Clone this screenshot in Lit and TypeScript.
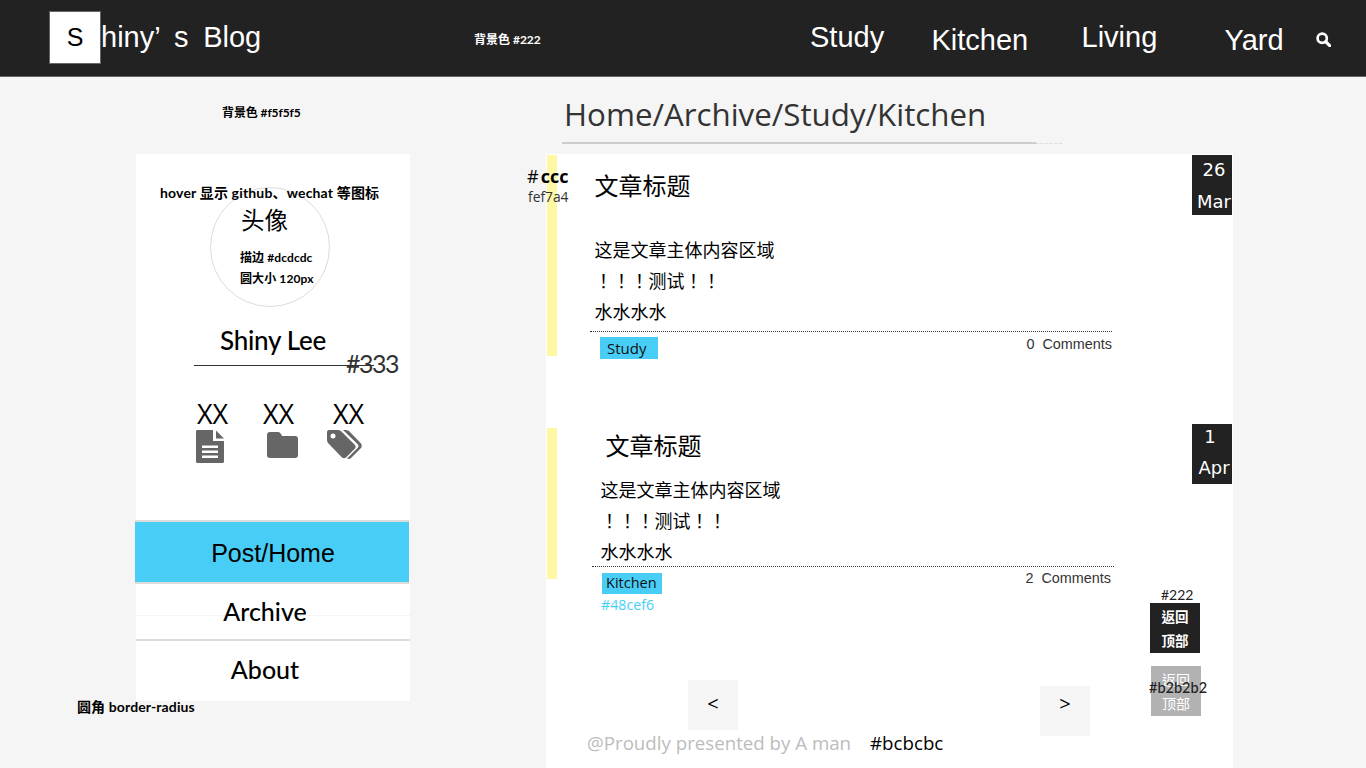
import { LitElement, html, css, svg } from "lit";
import { customElement } from "lit/decorators.js";

const fileIcon = svg`<svg class="ic file" viewBox="0 0 28 33"><path fill="#666" d="M1 0H17V11H28V31.500Q28 33 26.500 33H1.500Q0 33 0 31.500V1.500Q0 0 1 0ZM20 0.500L28 8.500H20ZM6 15.500V18H22V15.500ZM6 20.500V23H22V20.500ZM6 25.500V28H22V25.500Z" fill-rule="evenodd"/></svg>`;
const folderIcon = svg`<svg class="ic folder" viewBox="0 0 31 26"><path fill="#666" d="M3 0H11Q13 0 14 2L15 4H28Q31 4 31 7V23Q31 26 28 26H3Q0 26 0 23V3Q0 0 3 0Z"/></svg>`;
const tagsIcon = svg`<svg class="ic tags" viewBox="0 0 35 29"><path fill="#666" fill-rule="evenodd" d="M2 0H11Q13 0 14.500 1.500L28 15Q29.500 17 28 18.500L19 27.500Q17 29 15 27.500L1.500 13.500Q0 12 0 10V2Q0 0 2 0ZM6 3.500A2.500 2.500 0 1 0 6 8.500A2.500 2.500 0 1 0 6 3.500Z"/><path fill="#666" d="M16 0H19Q21 0 22.500 1.500L34 13.500Q35.500 16 34 18L24 28Q22 29.500 20 28.500L31 17.500Q32 16 31 14.500Z"/></svg>`;
const searchIcon = svg`<svg class="search" viewBox="0 0 14 14"><circle cx="5.800" cy="5.800" r="4.300" fill="none" stroke="#fff" stroke-width="2.500"/><path d="M9 9L12.800 12.800" stroke="#fff" stroke-width="3" stroke-linecap="round"/></svg>`;

@customElement("app-root")
export class AppRoot extends LitElement {
  static styles = css`
    :host {
      display: block; position: relative; width: 1366px; height: 768px; overflow: hidden;
      background: #f5f5f5; color: #000;
      font-family: "Lato", "Noto Sans CJK SC", sans-serif;
    }
    * { box-sizing: border-box; }
    .note { position: absolute; white-space: nowrap; line-height: 1; }
    .b { font-weight: 700; font-size: 12px; }
    .n-head { left: 474px; top: 34px; color: #fff; }
    .n-page { left: 222px; top: 107px; letter-spacing: -0.1px; }
    .n-hover { left: 160px; top: 186px; font-size: 14px; font-weight: 700; letter-spacing: 0.17px; }
    .n-avatar { left: 241px; top: 209px; font-size: 23.500px; }
    .n-border { left: 240px; top: 252px; letter-spacing: 0.1px; }
    .n-size { left: 240px; top: 273px; letter-spacing: 0.1px; }
    .n-333 { left: 346px; top: 351px; font-size: 25px; color: #333; letter-spacing: -1.500px; }
    .n-radius { left: 77px; top: 700px; font-size: 14px; font-weight: 700; letter-spacing: 0.12px; }
    .n-ccc { left: 527px; top: 167px; font-size: 18px; font-family: "Open Sans", sans-serif; }
    .n-ccc b { margin-left: 2px; }
    .n-fef { left: 528px; top: 190px; font-size: 13.800px; font-family: "Open Sans", sans-serif; color: #333; }
    .n-blue { left: 601px; top: 598px; font-size: 14.200px; font-family: "Open Sans", sans-serif; color: #48cef6; }
    .n-222 { left: 1161px; top: 588px; font-size: 14px; color: #222; }
    .n-b2 { left: 1149px; top: 681px; font-size: 14.500px; font-weight: 500; color: #222; }

    header {
      height: 77px; background: #222; border-bottom: 1px solid #666;
      display: flex; align-items: flex-start; color: #fff;
      font-family: "Liberation Sans", sans-serif; position: relative;
    }
    .logo {
      width: 52px; height: 53px; margin: 11px 0 0 49px; background: #fff; border: 1px solid #666;
      color: #000; font-size: 25px; display: flex; align-items: center; justify-content: center;
    }
    .brand { font-size: 29px; line-height: 34px; margin-top: 20px; word-spacing: 6.500px; white-space: nowrap; }
    .nav { position: absolute; left: 810px; top: 0; font-size: 29px; line-height: 34px; }
    .nav span { position: absolute; white-space: nowrap; }
    .nav .i1 { left: 0; top: 20px; }
    .nav .i2 { left: 121.500px; top: 23px; }
    .nav .i3 { left: 271.500px; top: 20px; }
    .nav .i4 { left: 414.500px; top: 23px; }
    .search { position: absolute; left: 1316px; top: 32px; width: 15px; height: 15px; }

    .body { display: flex; padding-left: 135px; height: 691px; }
    aside { width: 275px; margin-top: 77px; height: 547px; display: flex; flex-direction: column; background: #fff; border-left: 1px solid #f5f5f5; }
    .avatar {
      width: 120px; height: 120px; border: 1px solid #dcdcdc; border-radius: 50%;
      margin: 33px 0 0 74px; flex: none;
    }
    .name { font-size: 26px; font-weight: 500; letter-spacing: -0.300px; line-height: 34px; margin-top: 16px; text-align: center; height: 42px; }
    .rule { height: 1px; background: #333; width: 180px; margin-left: 58px; flex: none; }
    .stats { display: grid; grid-template-columns: 66px 70px 66px; margin: 32px 0 0 61px; height: 122px; flex: none; }
    .stat { display: flex; flex-direction: column; }
    .stat b { font-family: "Open Sans", sans-serif; font-weight: 500; font-size: 27px; line-height: 32px; }
    .ic { display: block; }
    .file { width: 28px; height: 33px; margin-left: -1px; }
    .folder { width: 31px; height: 26px; margin: 2px 0 0 4px; }
    .tags { width: 35px; height: 29px; margin-left: -6px; }
    .menu { display: flex; flex-direction: column; flex: 1; }
    .menu div { text-align: center; flex: none; font-size: 25px; font-weight: 500; }
    .menu .m1 { height: 64px; margin: 0 1px 0 -1px; padding-left: 2px; background: #48cef6; border-top: 2px solid #dcdcdc; border-bottom: 2px solid #dcdcdc; font-family: "Liberation Sans", sans-serif; font-weight: 400; line-height: 62px; }
    .m2 { height: 57px; line-height: 54px; padding-right: 16px; border-bottom: 2px solid #dcdcdc; background: linear-gradient(#fff 31px, #f5f5f5 31px, #f5f5f5 32px, #fff 32px); }
    .m3 { line-height: 56px; padding-right: 16px; }

    main { width: 687px; margin-left: 136px; display: flex; flex-direction: column; }
    .crumb { height: 77px; position: relative; flex: none; margin-left: 16px; font-family: "Open Sans", sans-serif; font-size: 31.300px; color: #333; line-height: 44px; padding: 15px 0 0 2px; }
    .crumb::after { content: ""; position: absolute; left: 0; top: 65px; width: 474px; height: 2px; background: #ccc; }
    .crumb i { position: absolute; left: 474px; top: 66px; width: 26px; height: 1px; border-top: 1px dashed #ddd; }
    .panel { background: #fff; flex: 1; position: relative; display: flex; flex-direction: column; font-family: "Noto Sans CJK TC", "Noto Sans CJK SC", sans-serif; }
    article { position: relative; flex: none; }
    .a1 { height: 274px; padding: 15px 0 0 48.500px; }
    .a2 { height: 242px; padding: 1px 0 0 54.500px; }
    .bar { position: absolute; left: 1px; width: 10px; background: #fef7a4; }
    .a1 .bar { top: 1px; height: 201px; }
    .a2 .bar { top: 0; height: 151px; }
    h2 { margin: 0; font-weight: 400; font-size: 24px; line-height: 32px; font-family: "Noto Sans CJK SC", sans-serif; }
    .a1 h2 { margin-bottom: 33px; }
    .a2 h2 { padding-left: 5px; margin-bottom: 13px; }
    p { margin: 0; font-size: 18px; line-height: 31px; white-space: nowrap; }
    .foot { border-top: 1px dotted #333; display: flex; justify-content: space-between; align-items: flex-start; width: 522px; }
    .a1 .foot { margin: 4px 0 0 -4.500px; padding: 5px 0 0 10px; }
    .a2 .foot { margin: -1px 0 0 -8.500px; padding: 6px 3px 0 10px; }
    .tag { background: #48cef6; font-family: "Open Sans", sans-serif; font-size: 15px; height: 22px; line-height: 22px; color: #111; padding: 0 12px 0 7px; }
    .a2 .tag { font-size: 14.500px; height: 21px; line-height: 20px; padding: 0 5px 0 4px; }
    .cm { font-family: "Liberation Sans", sans-serif; font-size: 14.400px; line-height: 16px; color: #333; white-space: pre; margin-top: -1px; }
    .a2 .cm { margin-top: -3px; }
    .date { position: absolute; left: 646px; width: 40px; height: 60px; background: #222; color: #fff; font-family: "DejaVu Sans", sans-serif; font-size: 18px; line-height: 30px; text-align: center; }
    .date span { display: block; }
    .a1 .date { top: 1px; padding-left: 4px; }
    .a1 .date span:last-child { margin-top: 2px; }
    .a2 .date { top: -4px; }
    .a2 .date span:first-child { margin-top: -2px; padding-right: 4px; }
    .a2 .date span:last-child { margin-top: 1px; padding-left: 4px; }
    .pager { display: flex; margin: 10px 0 0 142px; flex: none; }
    .pg { width: 50px; height: 50px; background: #f5f5f5; font-family: "Open Sans", sans-serif; font-size: 20px; line-height: 48px; text-align: center; }
    .pg.next { margin-left: 302px; margin-top: 6px; line-height: 36px; }
    .footer { position: absolute; left: 41px; top: 576px; font-family: "Open Sans", sans-serif; font-size: 18.700px; color: #bcbcbc; white-space: nowrap; line-height: 26px; }
    .footer span { color: #000; margin-left: 19px; }
    .top { position: absolute; width: 50px; height: 50px; color: #fff; font-size: 13.500px; font-weight: 700; line-height: 24px; text-align: center; padding-top: 1px; }
    .t1 { left: 604px; top: 449px; background: #222; }
    .t2 { left: 605px; top: 512px; background: #b2b2b2; font-weight: 400; font-size: 14px; }
  `;

  render() {
    return html`
      <header>
        <div class="logo">S</div>
        <div class="brand">hiny’ s Blog</div>
        <div class="nav">
          <span class="i1">Study</span>
          <span class="i2">Kitchen</span>
          <span class="i3">Living</span>
          <span class="i4">Yard</span>
        </div>
        ${searchIcon}
      </header>
      <div class="body">
        <aside>
          <div class="avatar"></div>
          <div class="name">Shiny Lee</div>
          <div class="rule"></div>
          <div class="stats">
            <div class="stat"><b>XX</b>${fileIcon}</div>
            <div class="stat"><b>XX</b>${folderIcon}</div>
            <div class="stat"><b>XX</b>${tagsIcon}</div>
          </div>
          <div class="menu">
            <div class="m1">Post/Home</div>
            <div class="m2">Archive</div>
            <div class="m3">About</div>
          </div>
        </aside>
        <main>
          <div class="crumb">Home/Archive/Study/Kitchen<i></i></div>
          <div class="panel">
            <article class="a1">
              <div class="bar"></div>
              <h2>文章标题</h2>
              <p>这是文章主体内容区域</p>
              <p>！！！测试！！</p>
              <p>水水水水</p>
              <div class="foot"><span class="tag">Study</span><span class="cm">0  Comments</span></div>
              <div class="date"><span>26</span><span>Mar</span></div>
            </article>
            <article class="a2">
              <div class="bar"></div>
              <h2>文章标题</h2>
              <p>这是文章主体内容区域</p>
              <p>！！！测试！！</p>
              <p>水水水水</p>
              <div class="foot"><span class="tag">Kitchen</span><span class="cm">2  Comments</span></div>
              <div class="date"><span>1</span><span>Apr</span></div>
            </article>
            <div class="pager"><div class="pg">&lt;</div><div class="pg next">&gt;</div></div>
            <div class="footer">@Proudly presented by A man<span>#bcbcbc</span></div>
            <div class="top t1">返回<br />顶部</div>
            <div class="top t2">返回<br />顶部</div>
          </div>
        </main>
      </div>
      <span class="note b n-head">背景色 #222</span>
      <span class="note b n-page">背景色 #f5f5f5</span>
      <span class="note n-hover">hover 显示 github、wechat 等图标</span>
      <span class="note n-avatar">头像</span>
      <span class="note b n-border">描边 #dcdcdc</span>
      <span class="note b n-size">圆大小 120px</span>
      <span class="note n-333">#333</span>
      <span class="note n-radius">圆角 border-radius</span>
      <span class="note n-ccc">#<b>ccc</b></span>
      <span class="note n-fef">fef7a4</span>
      <span class="note n-blue">#48cef6</span>
      <span class="note n-222">#222</span>
      <span class="note n-b2">#b2b2b2</span>
    `;
  }
}
